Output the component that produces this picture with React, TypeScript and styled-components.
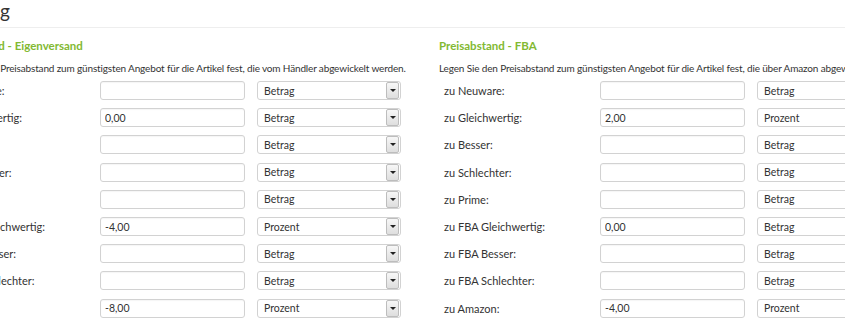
import React from 'react'
import styled, { createGlobalStyle } from 'styled-components'

interface Row {
  label: string
  value: string
  mode: string
}

interface Section {
  title: string
  text: string
  rows: Row[]
}

const sections: Section[] = [
  {
    title: 'Preisabstand - Eigenversand',
    text: 'Legen Sie den Preisabstand zum günstigsten Angebot für die Artikel fest, die vom Händler abgewickelt werden.',
    rows: [
      { label: 'zu Neuware:', value: '', mode: 'Betrag' },
      { label: 'zu Gleichwertig:', value: '0,00', mode: 'Betrag' },
      { label: 'zu Besser:', value: '', mode: 'Betrag' },
      { label: 'zu Schlechter:', value: '', mode: 'Betrag' },
      { label: 'zu Prime:', value: '', mode: 'Betrag' },
      { label: 'zu FBA Gleichwertig:', value: '-4,00', mode: 'Prozent' },
      { label: 'zu FBA Besser:', value: '', mode: 'Betrag' },
      { label: 'zu FBA Schlechter:', value: '', mode: 'Betrag' },
      { label: 'zu Amazon:', value: '-8,00', mode: 'Prozent' },
    ],
  },
  {
    title: 'Preisabstand - FBA',
    text: 'Legen Sie den Preisabstand zum günstigsten Angebot für die Artikel fest, die über Amazon abgewickelt werden.',
    rows: [
      { label: 'zu Neuware:', value: '', mode: 'Betrag' },
      { label: 'zu Gleichwertig:', value: '2,00', mode: 'Prozent' },
      { label: 'zu Besser:', value: '', mode: 'Betrag' },
      { label: 'zu Schlechter:', value: '', mode: 'Betrag' },
      { label: 'zu Prime:', value: '', mode: 'Betrag' },
      { label: 'zu FBA Gleichwertig:', value: '0,00', mode: 'Betrag' },
      { label: 'zu FBA Besser:', value: '', mode: 'Betrag' },
      { label: 'zu FBA Schlechter:', value: '', mode: 'Betrag' },
      { label: 'zu Amazon:', value: '-4,00', mode: 'Prozent' },
    ],
  },
]

export default function App() {
  return (
    <>
      <GlobalStyle />
      <SPage>
        <SHeader>
          <STitle>Preisanpassung</STitle>
        </SHeader>
        <SColumns>
          {sections.map((section, i) => (
            <SColumn key={i}>
              <SHeading>{section.title}</SHeading>
              <SText>{section.text}</SText>
              {section.rows.map((row, j) => (
                <SRow key={j}>
                  <SLabel>{row.label}</SLabel>
                  <SInput defaultValue={row.value} />
                  <SSelect>
                    <span>{row.mode}</span>
                    <SArrow />
                  </SSelect>
                </SRow>
              ))}
            </SColumn>
          ))}
        </SColumns>
      </SPage>
    </>
  )
}

const GlobalStyle = createGlobalStyle`
  html, body {
    margin: 0;
    padding: 0;
    background: #fff;
    overflow: hidden;
  }
  body {
    font-family: Lato, "Noto Sans", sans-serif;
    font-size: 11px;
    color: #333;
  }
`

const SPage = styled.div`
  width: 845px;
  height: 321px;
  overflow: hidden;
`

const SHeader = styled.div`
  height: 27px;
  border-bottom: 1px solid #eeeeee;
  overflow: hidden;
`

const STitle = styled.h1`
  width: 200px;
  margin: 0 0 0 -190px;
  font-size: 19px;
  font-weight: 400;
  line-height: 22px;
  text-align: right;
  color: #333;
  white-space: nowrap;
`

const SColumns = styled.div`
  display: flex;
  margin-left: -61px;
  padding-top: 9px;
`

const SColumn = styled.div`
  flex: 0 0 500px;
  min-width: 0;
  white-space: nowrap;
`

const SHeading = styled.div`
  font-size: 11.5px;
  font-weight: 700;
  color: #82b932;
  line-height: 18px;
`

const SText = styled.div`
  margin-top: 4px;
  font-size: 10px;
  letter-spacing: -0.15px;
  line-height: 18px;
`

const SRow = styled.div`
  display: grid;
  grid-template-columns: 149px 145px 144px;
  column-gap: 12px;
  align-items: center;
  height: 27.2px;
`

const SLabel = styled.span`
  padding-left: 5px;
`

const SInput = styled.input`
  box-sizing: border-box;
  height: 19px;
  width: 145px;
  border: 1px solid #d2d2d2;
  border-radius: 3px;
  padding: 0 4px;
  font: inherit;
  font-size: 10.5px;
  color: #333;
  outline: none;
  box-shadow: inset 0 1px 1px rgba(0, 0, 0, 0.04);
`

const SSelect = styled.div`
  box-sizing: border-box;
  height: 19px;
  width: 144px;
  border: 1px solid #d2d2d2;
  border-radius: 3px;
  display: flex;
  align-items: center;
  justify-content: space-between;
  padding-left: 6px;
  font-size: 10.5px;
  overflow: hidden;
`

const SArrow = styled.div`
  width: 11px;
  height: 15px;
  margin-right: 1px;
  border: 1px solid #bdbdbd;
  border-radius: 2px;
  background: linear-gradient(#f7f7f7, #dedede);
  position: relative;
  &::after {
    content: '';
    position: absolute;
    left: 3px;
    top: 6px;
    border-left: 3px solid transparent;
    border-right: 3px solid transparent;
    border-top: 3px solid #222;
  }
`
